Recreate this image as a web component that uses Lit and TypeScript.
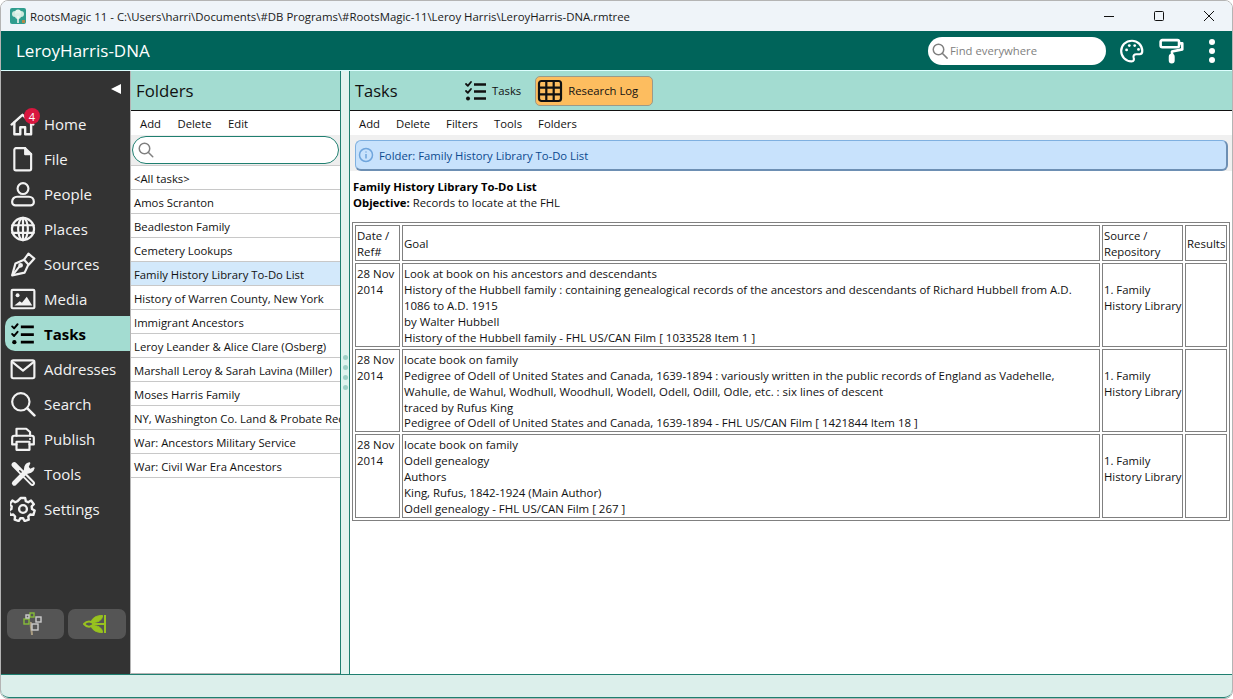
import { LitElement, html, css, svg } from "lit";
import { customElement } from "lit/decorators.js";

const S = (body: unknown, size = 26, vb = 24) =>
  html`<svg width=${size} height=${size} viewBox="0 0 ${vb} ${vb}" fill="none" stroke="currentColor" stroke-width="2" stroke-linecap="round" stroke-linejoin="round">${body}</svg>`;

const listIcon = svg`<path d="M2 5l1.800 1.800L7 3M2 12l1.800 1.800L7 10" stroke-width="1.800"/><path d="M10 5.500h12M10 12.500h12M10 19.500h12" stroke-width="2.600" stroke-linecap="butt"/><circle cx="4" cy="19.500" r="2" fill="currentColor" stroke="none"/>`;

const icons: Record<string, unknown> = {
  Home: svg`<path d="M1.500 12.500L11.500 3.500l10 9" stroke-width="2.200"/><path d="M4 10.500V21.500h5.500v-6.500h4.500v6.500H19.500V10.500" stroke-width="2.200"/>`,
  File: svg`<path d="M5.500 2h8.500l5.500 5.500V21a1.500 1.500 0 0 1-1.500 1.500H5.500A1.500 1.500 0 0 1 4 21V3.500A1.500 1.500 0 0 1 5.500 2z"/><path d="M14 2v5.500h5.500" fill="currentColor"/>`,
  People: svg`<circle cx="12" cy="7" r="5"/><path d="M6.500 14.500h11a4.500 4.500 0 0 1 4.500 4.500v.500a3 3 0 0 1-3 3H5a3 3 0 0 1-3-3V19a4.500 4.500 0 0 1 4.500-4.500z"/>`,
  Places: svg`<circle cx="12" cy="12" r="10.200"/><ellipse cx="12" cy="12" rx="4.500" ry="10.200"/><path d="M2 8.500h20M2 15.500h20M12 2v20"/>`,
  Sources: svg`<path d="M2 22.500l3-11 8-3.500 4 4.500-3.500 7.500z"/><path d="M2.500 22L9 14"/><circle cx="9.800" cy="13.200" r="1.200"/><path d="M13 8l4-5.500 5.500 4.500-5 5.500"/>`,
  Media: svg`<rect x="1.500" y="3.500" width="21" height="17" rx="1"/><circle cx="7" cy="8.500" r="1.800" fill="currentColor" stroke="none"/><path d="M4 18l5-4 2 1.500 4.500-5.500 5 8z" fill="currentColor" stroke="none"/>`,
  Tasks: listIcon,
  Addresses: svg`<rect x="1.500" y="4" width="21" height="16.500" rx="1.500"/><path d="M2 5.500l10 8 10-8"/>`,
  Search: svg`<circle cx="10" cy="10" r="8"/><path d="M16 16l6.500 6.500" stroke-width="2.400"/>`,
  Publish: svg`<path d="M6 9V2.500h9l3.500 3V9"/><path d="M6 17H2V11a2 2 0 0 1 2-2h16a2 2 0 0 1 2 2v6h-4"/><rect x="6" y="14.500" width="12" height="7.500"/><circle cx="18.500" cy="12" r="1" fill="currentColor" stroke="none"/>`,
  Tools: svg`<path d="M4 3.500L20.500 20.500" stroke-width="5"/><path d="M9 9L20.500 20.500" stroke="#333" stroke-width="1.300"/><path d="M4 20.500L14.500 10" stroke-width="4.500"/><path d="M14.500 10.500a5.500 5.500 0 0 1 3.500-8.500l-1.500 3.500 2 2.500 3.500-1.500a5.500 5.500 0 0 1-7.500 4" fill="currentColor" stroke-width="1.500"/>`,
  Settings: svg`<circle cx="12" cy="12" r="3.600" stroke-width="2.200"/><path d="M10 1.800h4l.6 3 2.200 1 2.600-1.600 2.600 3.400-2 2 .3 2.400 2.500 1.400-1.200 4-3-.3-1.700 1.800.4 3-3.800 1.200-1.500-2.600h-2.400l-1.500 2.600-3.800-1.200.4-3-1.700-1.800-3 .3-1.200-4 2.500-1.400.3-2.400-2-2 2.600-3.400 2.600 1.600 2.200-1z" stroke-width="2.200"/>`,
};
const nav = ["Home", "File", "People", "Places", "Sources", "Media", "Tasks", "Addresses", "Search", "Publish", "Tools", "Settings"];
const folders = ["<All tasks>", "Amos Scranton", "Beadleston Family", "Cemetery Lookups", "Family History Library To-Do List", "History of Warren County, New York", "Immigrant Ancestors", "Leroy Leander & Alice Clare (Osberg)", "Marshall Leroy & Sarah Lavina (Miller)", "Moses Harris Family", "NY, Washington Co. Land & Probate Records", "War: Ancestors Military Service", "War: Civil War Era Ancestors"];
const rows = [
  ["Look at book on his ancestors and descendants", "History of the Hubbell family : containing genealogical records of the ancestors and descendants of Richard Hubbell from A.D. 1086 to A.D. 1915", "by Walter Hubbell", "History of the Hubbell family - FHL US/CAN Film [ 1033528 Item 1 ]"],
  ["locate book on family", "Pedigree of Odell of United States and Canada, 1639-1894 : variously written in the public records of England as Vadehelle, Wahulle, de Wahul, Wodhull, Woodhull, Wodell, Odell, Odill, Odle, etc. : six lines of descent", "traced by Rufus King", "Pedigree of Odell of United States and Canada, 1639-1894 - FHL US/CAN Film [ 1421844 Item 18 ]"],
  ["locate book on family", "Odell genealogy", "Authors", "King, Rufus, 1842-1924 (Main Author)", "Odell genealogy - FHL US/CAN Film [ 267 ]"],
];

@customElement("app-root")
export class AppRoot extends LitElement {
  static styles = css`
    :host { display: block; width: 1233px; height: 699px; font-family: "Open Sans", "Noto Sans", sans-serif; font-size: 11.3px; color: #111; background: #fff; overflow: hidden; }
    * { box-sizing: border-box; }
    .win { width: 1233px; height: 699px; display: flex; flex-direction: column; border: 1px solid #b4b4b4; border-radius: 8px; overflow: hidden; background: #fff; }
    .title { height: 30px; flex: none; display: flex; align-items: center; background: #eff4f9; padding-left: 9px; gap: 4px; font-size: 11.4px; color: #1a1a1a; }
    .title .txt { flex: 1; white-space: nowrap; }
    .ctl { width: 46px; height: 30px; display: flex; align-items: center; justify-content: center; color: #111; }
    .head { height: 39px; flex: none; background: #00645a; display: flex; align-items: center; color: #fff; padding-left: 15px; }
    .head .db { font-size: 17px; flex: 1; }
    .find { width: 178px; height: 28px; border-radius: 14px; background: #fff; display: flex; align-items: center; padding-left: 3px; gap: 1px; color: #808080; font-size: 11.3px; }
    .find svg { flex: none; }
    .hicons { display: flex; align-items: center; color: #fff; padding-left: 13px; padding-right: 16px; gap: 14px; }
    .hicons svg { display: block; }
    .hicons .dots { margin-left: 9px; }
    .main { flex: 1; display: flex; min-height: 0; border-top: 1px solid #dff; }
    .side { width: 129px; flex: none; background: #333; color: #f2f2f2; display: flex; flex-direction: column; }
    .collapse { height: 35px; flex: none; display: flex; justify-content: flex-end; align-items: center; padding: 0 9px 0 0; }
    .tri { width: 0; height: 0; border-style: solid; border-width: 5.5px 10px 5.5px 0; border-color: transparent #fff transparent transparent; }
    .item { height: 35px; flex: none; display: flex; align-items: center; margin-left: 4px; padding-left: 5px; gap: 8px; font-size: 15px; position: relative; }
    .item svg { flex: none; }
    .item.on { background: #a3dcd1; color: #000; font-weight: 700; border-radius: 10px 0 0 10px; }
    .badge { position: absolute; left: 19px; top: 2px; width: 16px; height: 16px; border-radius: 50%; background: #d8173f; color: #fff; font-size: 11px; display: flex; align-items: center; justify-content: center; }
    .bottom { margin-top: auto; display: flex; gap: 4px; padding: 0 4px 35px 6px; }
    .bbtn { height: 30px; border-radius: 7px; background: #555; display: flex; align-items: center; justify-content: center; }
    .bbtn.a { width: 57px; }
    .bbtn.b { width: 58px; }
    .bbtn.a svg { margin-right: 5px; }
    .bbtn.b svg { margin-right: 5px; }
    .folders { width: 210px; flex: none; display: flex; flex-direction: column; border-left: 1px solid #b4b4b4; border-bottom: 1px solid #b4b4b4; background: #fff; }
    .phead { height: 40px; flex: none; background: #a3dcd1; border-bottom: 1px solid #111; display: flex; align-items: center; font-size: 16.8px; padding-left: 5px; color: #111; }
    .tools { height: 24px; flex: none; display: flex; align-items: center; background: #fff; }
    .ftools { padding-left: 9px; gap: 16.5px; }
    .rtools { padding-left: 9px; gap: 16px; }
    .fsearch { height: 30px; flex: none; background: #eee; padding: 1px 0 1px 1px; }
    .fsearch .box { height: 28px; width: 207px; border: 1px solid #1f7f70; border-radius: 14px; background: #fff; display: flex; align-items: center; padding-left: 4px; color: #808080; }
    .flist { overflow: hidden; border-top: 1px solid #ccc; }
    .f { height: 24px; border-bottom: 1px solid #c8c8c8; padding: 3px 0 0 3px; white-space: nowrap; line-height: 20px; overflow: hidden; }
    .f.on { background: #d3e9fb; }
    .split { width: 10px; flex: none; background: #e2f3ef; border-left: 1px solid #1f7f70; border-right: 1px solid #1f7f70; display: flex; flex-direction: column; align-items: center; justify-content: center; gap: 5px; }
    .dot { width: 5px; height: 5px; border-radius: 50%; background: #9fd0c6; }
    .right { flex: 1; min-width: 0; display: flex; flex-direction: column; background: #fff; }
    .rhead { height: 40px; flex: none; background: #a3dcd1; border-bottom: 1px solid #111; display: flex; align-items: center; padding-left: 5px; color: #111; }
    .rhead .t { font-size: 16.5px; width: 109px; flex: none; }
    .tab { display: flex; align-items: center; flex: none; gap: 5px; height: 30px; }
    .tab svg { flex: none; }
    .tab.a { gap: 4px; }
    .tab.b { margin-left: 14px; width: 118px; padding-left: 1px; background: #fdbd5f; border: 1px solid #9a9a8a; border-radius: 5px; }
    .band { height: 41px; flex: none; background: linear-gradient(#f0f0f0 36px, #fff 36px); padding: 5px 4px 0 5px; }
    .info { height: 31px; background: #c8e2fc; border: 1px solid #7fb0e0; border-bottom: 2px solid #6d8fb3; border-right: 2px solid #6d8fb3; border-radius: 6px; display: flex; align-items: center; gap: 5px; padding-left: 2px; color: #0c4a8f; }
    .doc { padding: 3px 0 0 3px; flex: 1; line-height: 16px; }
    .doc b { font-weight: 700; color: #000; }
    table { margin: 11px 0 0 -1px; border: 1px solid #808080; border-spacing: 2px; border-collapse: separate; width: 878px; table-layout: fixed; line-height: 15.9px; font-size: 11.45px; }
    td { border: 1px solid #808080; padding: 2px 1px 0; vertical-align: top; color: #111; }
    td.m { vertical-align: middle; }
    td.src { padding-right: 0; font-size: 11.3px; }
    tr.first td { line-height: 16px; }
    .pad { height: 16px; }
    .status { height: 24px; flex: none; background: #dcefeb; border-top: 1px solid #1f7f70; border-bottom: 1px solid #1f7f70; border-radius: 0 0 8px 8px; }
  `;
  render() {
    return html`<div class="win">
      <div class="title">
        <svg width="16" height="16" viewBox="0 0 16 16"><rect width="16" height="16" rx="2" fill="#2f9d8e"/><circle cx="5" cy="6" r="3" fill="#cfeadf"/><circle cx="11" cy="6" r="3" fill="#cfeadf"/><circle cx="8" cy="4.500" r="3" fill="#e4f4ec"/><circle cx="8" cy="8" r="3" fill="#d8efe6"/><path d="M7.200 15V8h1.600v7z" fill="#f2f7f2"/><rect x="12" y="12" width="3" height="3" fill="#b08a4a"/></svg>
        <span class="txt">RootsMagic 11 - C:\\Users\\harri\\Documents\\#DB Programs\\#RootsMagic-11\\Leroy Harris\\LeroyHarris-DNA.rmtree</span>
        <span class="ctl"><svg width="12" height="12" viewBox="0 0 12 12" stroke="currentColor" fill="none"><path d="M1 6.500h10"/></svg></span>
        <span class="ctl"><svg width="12" height="12" viewBox="0 0 12 12" stroke="currentColor" fill="none"><rect x="1.500" y="1.500" width="9" height="9" rx="1"/></svg></span>
        <span class="ctl"><svg width="12" height="12" viewBox="0 0 12 12" stroke="currentColor" fill="none"><path d="M1 1l10 10M11 1L1 11"/></svg></span>
      </div>
      <div class="head">
        <span class="db">LeroyHarris-DNA</span>
        <div class="find">${S(svg`<circle cx="10" cy="10" r="7"/><path d="M15 15l6.500 6.500"/>`, 18)}<span>Find everywhere</span></div>
        <div class="hicons">
          ${S(svg`<path d="M12 2.500C6 2.500 2 7 2 12s4 9.500 9.500 9.500c2.500 0 2.500-2 2-3.500-.5-1.800.5-3 2.500-3h3c1.500 0 2.500-1 2.500-3 0-5.500-4.500-9.500-9.500-9.500z"/><circle cx="7" cy="11" r="1.300" fill="currentColor" stroke="none"/><circle cx="9.500" cy="7" r="1.300" fill="currentColor" stroke="none"/><circle cx="14.500" cy="7" r="1.300" fill="currentColor" stroke="none"/><circle cx="18" cy="10.500" r="1.300" fill="currentColor" stroke="none"/>`, 26)}
          ${S(svg`<rect x="1.500" y="2" width="17" height="6.500" rx="1.500" stroke-width="2.400"/><path d="M19 5h2.500v5.500L12 12.500v3" stroke-width="2.400"/><rect x="10" y="15.500" width="3.500" height="7" rx="1.700" fill="currentColor"/>`, 26)}
          <svg class="dots" width="8" height="26" viewBox="0 0 8 26"><circle cx="4" cy="4" r="3" fill="#fff"/><circle cx="4" cy="13" r="3" fill="#fff"/><circle cx="4" cy="22" r="3" fill="#fff"/></svg>
        </div>
      </div>
      <div class="main">
        <nav class="side">
          <div class="collapse"><span class="tri"></span></div>
          ${nav.map((n) => html`<div class="item ${n === "Tasks" ? "on" : ""}">${S(icons[n], 26)}<span>${n}</span>${n === "Home" ? html`<span class="badge">4</span>` : ""}</div>`)}
          <div class="bottom">
            <div class="bbtn a"><svg width="22" height="24" viewBox="0 0 22 24" fill="none" stroke-width="1.400"><path d="M10 23c0-5-2-7-1-13" stroke="#a89b80" stroke-width="2"/><rect x="2" y="7" width="5" height="5" stroke="#86bd38"/><rect x="8" y="1" width="4" height="4" stroke="#86bd38"/><rect x="4" y="3" width="3" height="3" stroke="#ccc"/><rect x="14" y="5" width="5" height="5" stroke="#ccc"/><rect x="10" y="12" width="6" height="6" stroke="#ccc"/></svg></div>
            <div class="bbtn b"><svg width="24" height="18" viewBox="0 0 24 18" fill="none" stroke="#98c21f" stroke-width="2"><path d="M22 0v18"/><path d="M1 9c3-3.500 7-3.500 10 0-3 3.500-7 3.500-10 0z"/><path d="M8 7.500C9 3 13 .5 19.500 .5 19.500 5 15 8 8 7.500zM8 10.500C9 15 13 17.500 19.500 17.500 19.500 13 15 10 8 10.500z" fill="#98c21f" stroke-width="1"/><path d="M11 9h11"/></svg></div>
          </div>
        </nav>
        <section class="folders">
          <div class="phead">Folders</div>
          <div class="tools ftools"><span>Add</span><span>Delete</span><span>Edit</span></div>
          <div class="fsearch"><div class="box">${S(svg`<circle cx="10" cy="10" r="7"/><path d="M15 15l6 6"/>`, 18)}</div></div>
          <div class="flist">${folders.map((f, i) => html`<div class="f ${i === 4 ? "on" : ""}">${f}</div>`)}</div>
        </section>
        <div class="split"><i class="dot"></i><i class="dot"></i><i class="dot"></i><i class="dot"></i></div>
        <section class="right">
          <div class="rhead">
            <span class="t">Tasks</span>
            <span class="tab a">${S(listIcon, 24)}<span>Tasks</span></span>
            <span class="tab b"><svg width="26" height="24" viewBox="0 0 26 24" fill="none" stroke="#111" stroke-width="2.200"><rect x="2" y="2" width="22" height="20" rx="2.500"/><path d="M9.300 2v20M16.700 2v20M2 8.700h22M2 15.300h22"/></svg><span>Research Log</span></span>
          </div>
          <div class="tools rtools"><span>Add</span><span>Delete</span><span>Filters</span><span>Tools</span><span>Folders</span></div>
          <div class="band"><div class="info"><svg width="16" height="16" viewBox="0 0 16 16" fill="none"><circle cx="8" cy="8" r="6.500" stroke="#6fa5dc" stroke-width="1.500"/><path d="M8 7v4.500M8 4.500v1" stroke="#6fa5dc" stroke-width="1.500"/></svg><span>Folder: Family History Library To-Do List</span></div></div>
          <div class="doc">
            <div><b>Family History Library To-Do List</b></div>
            <div><b>Objective:</b> Records to locate at the FHL</div>
            <table>
              <colgroup><col style="width:45px"/><col/><col style="width:81px"/><col style="width:42px"/></colgroup>
              <tr><td>Date / Ref#</td><td class="m">Goal</td><td class="src">Source / Repository</td><td class="m">Results</td></tr>
              ${rows.map((r, i) => html`<tr class=${i === 0 ? "first" : ""}><td>28 Nov 2014</td><td>${r.map((l) => html`<div>${l}</div>`)}</td><td class="src"><div class="pad"></div>1. Family History Library</td><td></td></tr>`)}
            </table>
          </div>
        </section>
      </div>
      <div class="status"></div>
    </div>`;
  }
}
